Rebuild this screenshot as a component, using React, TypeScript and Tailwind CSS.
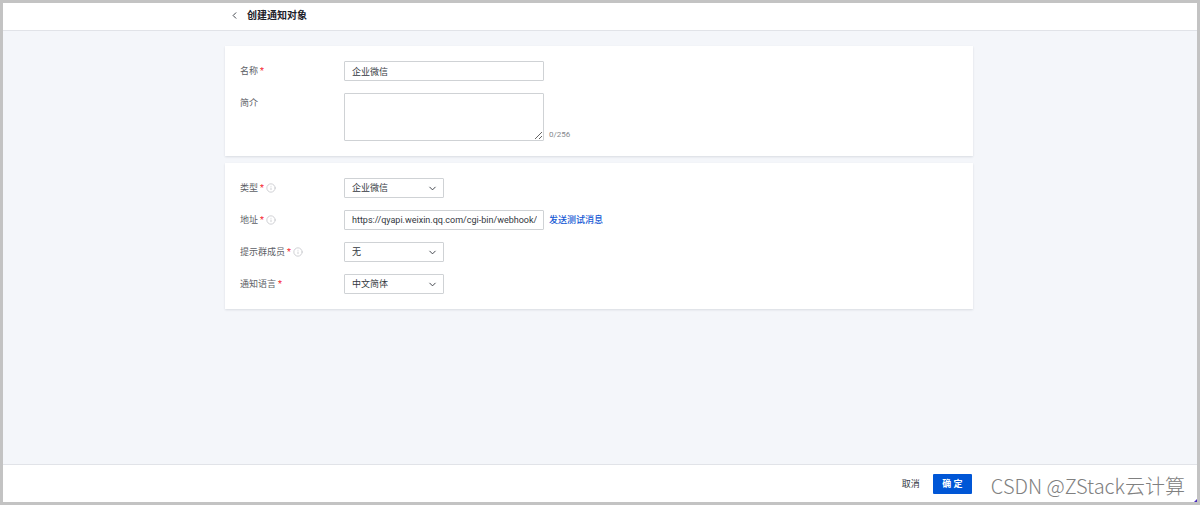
import { useState, type ReactNode } from "react";
import { ChevronDown, ChevronLeft, Info } from "lucide-react";

const MAX_LENGTH = 256;

const control =
  "rounded-[1px] border border-[#cfd2d5] bg-white text-[#333840] outline-none focus:border-[#0056d6]";

type FieldProps = {
  id: string;
  label: string;
  required?: boolean;
  hint?: boolean;
  children: ReactNode;
};

function Field({ id, label, required, hint, children }: FieldProps) {
  return (
    <div className="flex items-start">
      <div className="flex h-5 w-[104px] shrink-0 items-center gap-0.5">
        <label htmlFor={id} className="text-[#5c6066]">
          {label}
        </label>
        {required && (
          <span className="text-[#f5222d]" aria-hidden="true">
            *
          </span>
        )}
        {hint && <Info className="h-2.5 w-2.5 text-[#c6c8cc]" strokeWidth={2} />}
      </div>
      {children}
    </div>
  );
}

function SelectBox({ id, options }: { id: string; options: string[] }) {
  return (
    <div className="relative w-[100px]">
      <select id={id} className={`${control} block h-5 w-full appearance-none pr-5 pl-[7px]`}>
        {options.map((option) => (
          <option key={option}>{option}</option>
        ))}
      </select>
      <ChevronDown
        className="pointer-events-none absolute top-[5px] right-1.5 h-[11px] w-[11px] text-[#333840]"
        strokeWidth={2}
      />
    </div>
  );
}

function Card({ children }: { children: ReactNode }) {
  return (
    <section className="flex flex-col gap-3 bg-white p-[15px] shadow-[0_1px_2px_rgba(30,40,60,0.12)]">
      {children}
    </section>
  );
}

export default function App() {
  const [name, setName] = useState("企业微信");
  const [intro, setIntro] = useState("");
  const [address, setAddress] = useState(
    "https://qyapi.weixin.qq.com/cgi-bin/webhook/send?key=693a91f6"
  );

  return (
    <div
      lang="zh-CN"
      className="relative flex min-h-screen flex-col border-[3px] border-[#c3c3c3] bg-[#f4f6fa] font-[Roboto,'Noto_Sans_CJK_SC',sans-serif] text-[9px] leading-3"
    >
      <header className="border-b border-[#e1e3e8] bg-white">
        <div className="mx-auto flex h-[27px] max-w-[750px] items-center gap-[7px] px-1 pb-0.5">
          <button type="button" aria-label="返回" className="text-[#333840]">
            <ChevronLeft className="h-[11px] w-[11px]" strokeWidth={2} />
          </button>
          <h1 className="text-[10px] font-bold text-[#1c2028]">创建通知对象</h1>
        </div>
      </header>

      <main className="flex-1 pt-[15px] pr-0.5 pb-4">
        <form id="target-form" className="mx-auto flex max-w-[748px] flex-col gap-[7px]">
          <Card>
            <Field id="name" label="名称" required>
              <input
                id="name"
                value={name}
                onChange={(e) => setName(e.target.value)}
                className={`${control} h-5 w-[200px] px-[7px]`}
              />
            </Field>
            <Field id="intro" label="简介">
              <div className="flex items-end gap-[5px]">
                <textarea
                  id="intro"
                  maxLength={MAX_LENGTH}
                  value={intro}
                  onChange={(e) => setIntro(e.target.value)}
                  className={`${control} block h-12 w-[200px] resize px-[7px] py-1`}
                />
                <span className="text-[8px] text-[#85888d]">
                  {intro.length}/{MAX_LENGTH}
                </span>
              </div>
            </Field>
          </Card>

          <Card>
            <Field id="type" label="类型" required hint>
              <SelectBox id="type" options={["企业微信", "钉钉", "邮箱"]} />
            </Field>
            <Field id="address" label="地址" required hint>
              <div className="flex items-center gap-[5px]">
                <input
                  id="address"
                  value={address}
                  onChange={(e) => setAddress(e.target.value)}
                  className={`${control} h-5 w-[200px] pr-1.5 pl-[7px]`}
                />
                <a href="#test" className="font-medium text-[#1458d4]">
                  发送测试消息
                </a>
              </div>
            </Field>
            <Field id="members" label="提示群成员" required hint>
              <SelectBox id="members" options={["无", "全部成员"]} />
            </Field>
            <Field id="language" label="通知语言" required>
              <SelectBox id="language" options={["中文简体", "English"]} />
            </Field>
          </Card>
        </form>
      </main>

      <footer className="flex h-[38px] items-center justify-end gap-[5px] border-t border-[#e1e3e8] bg-white pr-3">
        <button type="button" className="h-5 px-2 text-[#333840]">
          取消
        </button>
        <button
          type="submit"
          form="target-form"
          className="h-5 w-[39px] rounded-[1px] bg-[#0056d6] font-bold text-white"
        >
          确 定
        </button>
        <span className="ml-3.5 pt-1 font-['Noto_Sans_CJK_SC',sans-serif] text-[20px] leading-6 font-light whitespace-nowrap text-[#808080]">
          CSDN @ZStack云计算
        </span>
      </footer>

      <svg className="absolute right-0 bottom-0 h-[3px] w-[3px]" viewBox="0 0 3 3" aria-hidden="true">
        <path d="M3 0v3H0z" fill="#4a2bc0" />
      </svg>
    </div>
  );
}
